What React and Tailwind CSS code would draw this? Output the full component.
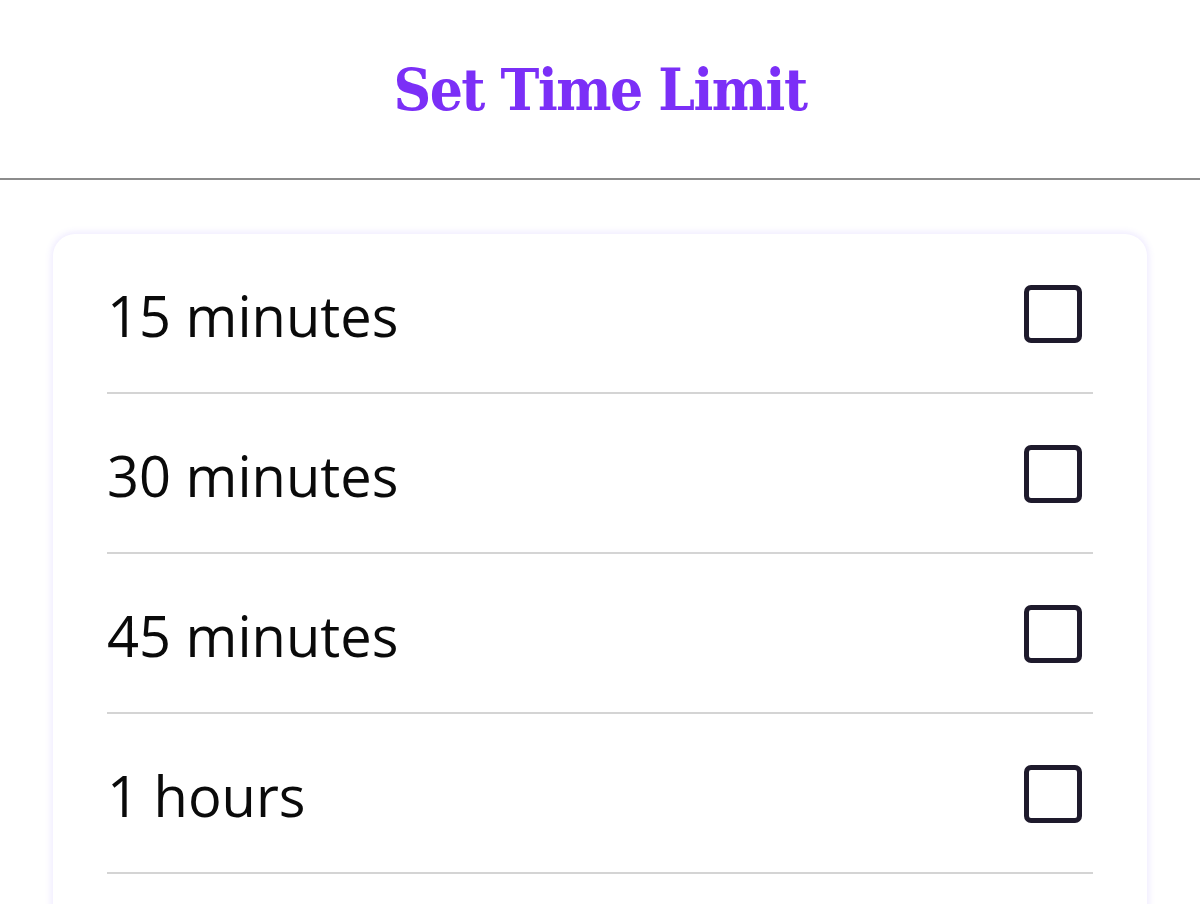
import React from "react";

const options = ["15 minutes", "30 minutes", "45 minutes", "1 hours"];

export default function App() {
  return (
    <div className="min-h-[904px] bg-white">
      <header className="h-[180px] flex items-center justify-center border-b-2 border-[#8c8c8c]">
        <h1 className="pt-[2px] text-[58px] font-bold text-[#7b2ff7] leading-none font-['DejaVu_Serif_Condensed','DejaVu_Serif',serif] [font-stretch:condensed] tracking-[-1.5px]">
          Set Time Limit
        </h1>
      </header>
      <main className="px-[53px] pt-[54px]">
        <div className="rounded-[22px] bg-white pb-[120px] shadow-[0_0_6px_2px_rgba(124,92,255,0.12)]">
          {options.map((o) => (
            <div
              key={o}
              className="mx-[54px] h-[160px] flex items-center justify-between border-b-2 border-[#d4d4d4]"
            >
              <span className="pt-[4px] text-[56px] leading-none text-[#0a0a0a] font-['Open_Sans',sans-serif]">{o}</span>
              <span className="mr-[11px] mt-[2px] w-[58px] h-[58px] rounded-[7px] border-[5px] border-[#1e1a2c] bg-white" />
            </div>
          ))}
        </div>
      </main>
    </div>
  );
}
